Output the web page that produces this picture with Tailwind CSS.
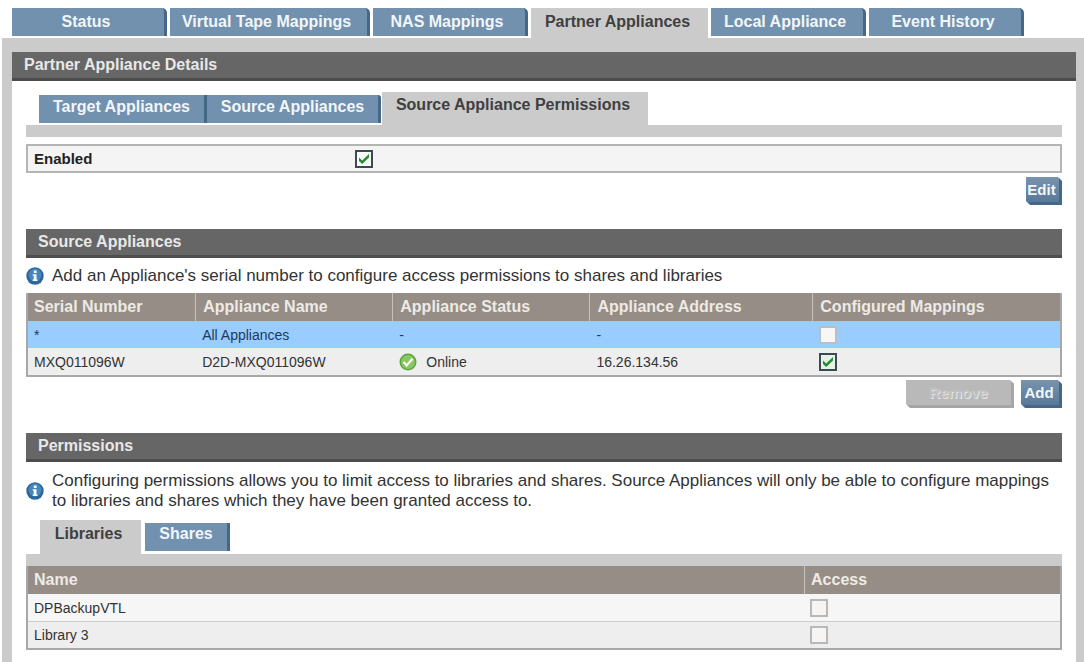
<!DOCTYPE html>
<html lang="en">
<head>
  <meta charset="UTF-8" />
  <meta name="viewport" content="width=device-width, initial-scale=1.0"/>
  <title>Partner Appliances</title>
  <script src="https://cdn.jsdelivr.net/npm/@tailwindcss/browser@4"></script>
</head>
<body class="bg-white min-h-screen flex flex-col font-['Liberation_Sans',Arial,sans-serif] text-[14px] leading-[20px] text-[#333333]">

  <!-- Main tabs -->
  <nav class="flex items-start pt-2 pl-3 gap-[3px] h-[38px] shrink-0 text-[16px] font-bold text-[#f2f6fa]">
    <button class="w-[155px] h-7 bg-[#7191ae] pr-1 border-r-3 border-[#456887] rounded-tr-[5px]">Status</button>
    <button class="w-[200px] h-7 bg-[#7191ae] pr-1 border-r-3 border-[#456887] rounded-tr-[5px]">Virtual Tape Mappings</button>
    <button class="w-[155px] h-7 bg-[#7191ae] pr-1 border-r-3 border-[#456887] rounded-tr-[5px]">NAS Mappings</button>
    <button class="w-[177px] h-[30px] pb-[2px] pr-1 bg-[#cbcbcb] text-[#404040]">Partner Appliances</button>
    <button class="w-[155px] h-7 bg-[#7191ae] pr-1 border-r-3 border-[#456887] rounded-tr-[5px]">Local Appliance</button>
    <button class="w-[155px] h-7 bg-[#7191ae] pr-1 border-r-3 border-[#456887] rounded-tr-[5px]">Event History</button>
  </nav>

  <div class="grow ml-[2px] bg-[#cbcbcb] pl-[10px] pr-2 pt-[14px] flex flex-col">
    <h1 class="h-[29px] px-3 bg-[#666666] border-b-3 border-[#4d4d4d] text-[16px] leading-[26px] font-bold text-[#e8e8e8]">Partner Appliance Details</h1>

    <main class="grow bg-white px-[14px] pt-[11px] pb-3">

      <!-- Partner tabs -->
      <nav class="flex items-end pl-[13px] text-[16px] font-bold text-[#f2f6fa]">
        <button class="w-[168px] h-7 mb-[2px] pb-1 bg-[#7191ae] border-r-3 border-[#456887]">Target Appliances</button>
        <button class="w-[174px] h-7 mb-[2px] pb-1 bg-[#7191ae] border-r-3 border-[#456887] rounded-tr-[3px]">Source Appliances</button>
        <button class="w-[266px] h-[33px] ml-px pb-[7px] pr-1 bg-[#cbcbcb] text-[#404040]">Source Appliance Permissions</button>
      </nav>
      <div class="h-3 bg-[#cbcbcb]"></div>

      <div class="mt-[7px] h-[29px] flex items-center px-[6px] bg-[#f4f4f4] border-2 border-[#b5b5b5]">
        <label for="enabled" class="w-[316px] text-[15px] font-bold text-[#222222]">Enabled</label>
        <span class="grid ml-[5px]">
          <input id="enabled" type="checkbox" checked class="col-start-1 row-start-1 appearance-none size-[18px] bg-[#f6fbf6] border-2 border-[#3f4a50]">
          <svg class="col-start-1 row-start-1 size-[18px] pointer-events-none" viewBox="0 0 18 18"><path d="M4 7.5v3.6l3.2 3 6.8-6.6V4L7.2 10.4z" fill="#2c8a35"/></svg>
        </span>
      </div>
      <div class="flex justify-end mt-1">
        <button class="w-9 h-7 pr-[2px] bg-linear-to-b from-[#7893ae] to-[#58799a] border-r-3 border-b-3 border-[#456887] text-[15px] leading-[24px] font-bold text-[#f2f6fa] [clip-path:polygon(0_0,32px_0,100%_4px,100%_100%,4px_100%,0_24px)]">Edit</button>
      </div>

      <!-- Source appliances -->
      <h2 class="mt-6 h-[29px] px-3 bg-[#666666] border-b-3 border-[#4d4d4d] text-[16px] leading-[26px] font-bold text-[#e8e8e8]">Source Appliances</h2>
      <div class="h-[35px] flex items-center gap-[8px] text-[17px]">
        <svg class="size-[18px] shrink-0" viewBox="0 0 18 18"><circle cx="9" cy="9" r="8.7" fill="#2c679b"/><circle cx="9" cy="8" r="6.5" fill="#4686b8"/><path d="M7.8 3.5h2.8v2.4H7.8zM6.8 7.2h3.7v5.3h1v1.6H6.7v-1.6h1V8.8h-.9z" fill="#fff"/></svg>
        <p>Add an Appliance's serial number to configure access permissions to shares and libraries</p>
      </div>

      <table class="w-full table-fixed border-separate border-spacing-0 border-x-2 border-b-2 border-[#a8a8a8] text-left">
        <colgroup>
          <col class="w-[16.2%]"><col class="w-[19.1%]"><col class="w-[19.1%]"><col class="w-[21.6%]"><col>
        </colgroup>
        <thead class="bg-[#958d86] text-[16px] text-[#eeeae5]">
          <tr class="h-7">
            <th class="px-[6px]">Serial Number</th>
            <th class="px-[7px] border-l border-[#c8c2bc]">Appliance Name</th>
            <th class="px-[7px] border-l border-[#c8c2bc]">Appliance Status</th>
            <th class="px-[7px] border-l border-[#c8c2bc]">Appliance Address</th>
            <th class="px-[7px] border-l border-[#c8c2bc]">Configured Mappings</th>
          </tr>
        </thead>
        <tbody>
          <tr class="h-[27px] bg-[#99ccff] text-[#1f3a5c]">
            <td class="px-[6px]">*</td>
            <td class="px-[7px]">All Appliances</td>
            <td class="px-[7px]">-</td>
            <td class="px-[7px]">-</td>
            <td class="px-[7px]">
              <input type="checkbox" aria-label="All Appliances mappings" class="block appearance-none size-[18px] bg-[#f7f7f7] border-2 border-[#b8bfc6]">
            </td>
          </tr>
          <tr class="h-[27px] bg-[#eeeeee]">
            <td class="px-[6px]">MXQ011096W</td>
            <td class="px-[7px]">D2D-MXQ011096W</td>
            <td class="px-[7px]">
              <div class="flex items-center gap-[9px]">
                <svg class="size-[18px]" viewBox="0 0 18 18"><circle cx="9" cy="9" r="8.5" fill="#5ca53c"/><circle cx="9" cy="9" r="7" fill="#88c763"/><path d="M4.5 9l3.2 3.4 5.8-6.6" fill="none" stroke="#fff" stroke-width="2.2"/></svg>
                Online
              </div>
            </td>
            <td class="px-[7px]">16.26.134.56</td>
            <td class="px-[7px]">
              <span class="grid w-[18px]">
                <input type="checkbox" checked aria-label="MXQ011096W mappings" class="col-start-1 row-start-1 appearance-none size-[18px] bg-[#e3f3e6] border-2 border-[#3f4a50]">
                <svg class="col-start-1 row-start-1 size-[18px] pointer-events-none" viewBox="0 0 18 18"><path d="M4 7.5v3.6l3.2 3 6.8-6.6V4L7.2 10.4z" fill="#2c8a35"/></svg>
              </span>
            </td>
          </tr>
        </tbody>
      </table>
      <div class="flex justify-end gap-[7px] mt-[3px] text-[15px] leading-[24px] font-bold">
        <button disabled class="w-[108px] h-7 bg-[#b9b9b9] border-r-3 border-b-3 border-[#a6a6a6] text-[#c0c0c0] text-shadow-[1px_1px_0_#e6e6e6] [clip-path:polygon(0_0,104px_0,100%_4px,100%_100%,4px_100%,0_24px)]">Remove</button>
        <button class="w-[41px] h-7 pr-[2px] bg-linear-to-b from-[#7893ae] to-[#58799a] border-r-3 border-b-3 border-[#456887] text-[#f2f6fa] [clip-path:polygon(0_0,37px_0,100%_4px,100%_100%,4px_100%,0_24px)]">Add</button>
      </div>

      <!-- Permissions -->
      <h2 class="mt-[25px] h-[29px] px-3 bg-[#666666] border-b-3 border-[#4d4d4d] text-[16px] leading-[26px] font-bold text-[#e8e8e8]">Permissions</h2>
      <div class="h-[58px] flex items-center gap-[8px] text-[17px] whitespace-nowrap">
        <svg class="size-[18px] shrink-0" viewBox="0 0 18 18"><circle cx="9" cy="9" r="8.7" fill="#2c679b"/><circle cx="9" cy="8" r="6.5" fill="#4686b8"/><path d="M7.8 3.5h2.8v2.4H7.8zM6.8 7.2h3.7v5.3h1v1.6H6.7v-1.6h1V8.8h-.9z" fill="#fff"/></svg>
        <p>Configuring permissions allows you to limit access to libraries and shares. Source Appliances will only be able to configure mappings<br>to libraries and shares which they have been granted access to.</p>
      </div>

      <nav class="flex items-end pl-[14px] gap-1 text-[16px] font-bold text-[#f2f6fa]">
        <button class="w-[101px] h-[34px] pb-[7px] pr-1 bg-[#cbcbcb] text-[#404040]">Libraries</button>
        <button class="w-[85px] h-7 mb-[3px] pb-[6px] bg-[#7191ae] border-r-3 border-[#456887]">Shares</button>
      </nav>
      <div class="h-3 bg-[#cbcbcb]"></div>

      <table class="w-full table-fixed border-separate border-spacing-0 border-x-2 border-b-2 border-[#a8a8a8] text-left">
        <colgroup><col class="w-[75.2%]"><col></colgroup>
        <thead class="bg-[#958d86] text-[16px] text-[#eeeae5]">
          <tr class="h-7">
            <th class="px-[6px]">Name</th>
            <th class="px-[6px] border-l border-[#c8c2bc]">Access</th>
          </tr>
        </thead>
        <tbody>
          <tr class="h-7 bg-[#f6f6f6]">
            <td class="px-[6px] border-b border-[#cccccc]"><label for="access-vtl">DPBackupVTL</label></td>
            <td class="px-[6px] border-b border-[#cccccc]"><input id="access-vtl" type="checkbox" class="block appearance-none size-[18px] bg-[#f7f5f3] border-2 border-[#b8b8b8]"></td>
          </tr>
          <tr class="h-[26px] bg-[#eeeeee]">
            <td class="px-[6px]"><label for="access-lib3">Library 3</label></td>
            <td class="px-[6px]"><input id="access-lib3" type="checkbox" class="block appearance-none size-[18px] bg-[#f7f5f3] border-2 border-[#b8b8b8]"></td>
          </tr>
        </tbody>
      </table>
    </main>
  </div>

</body>
</html>
